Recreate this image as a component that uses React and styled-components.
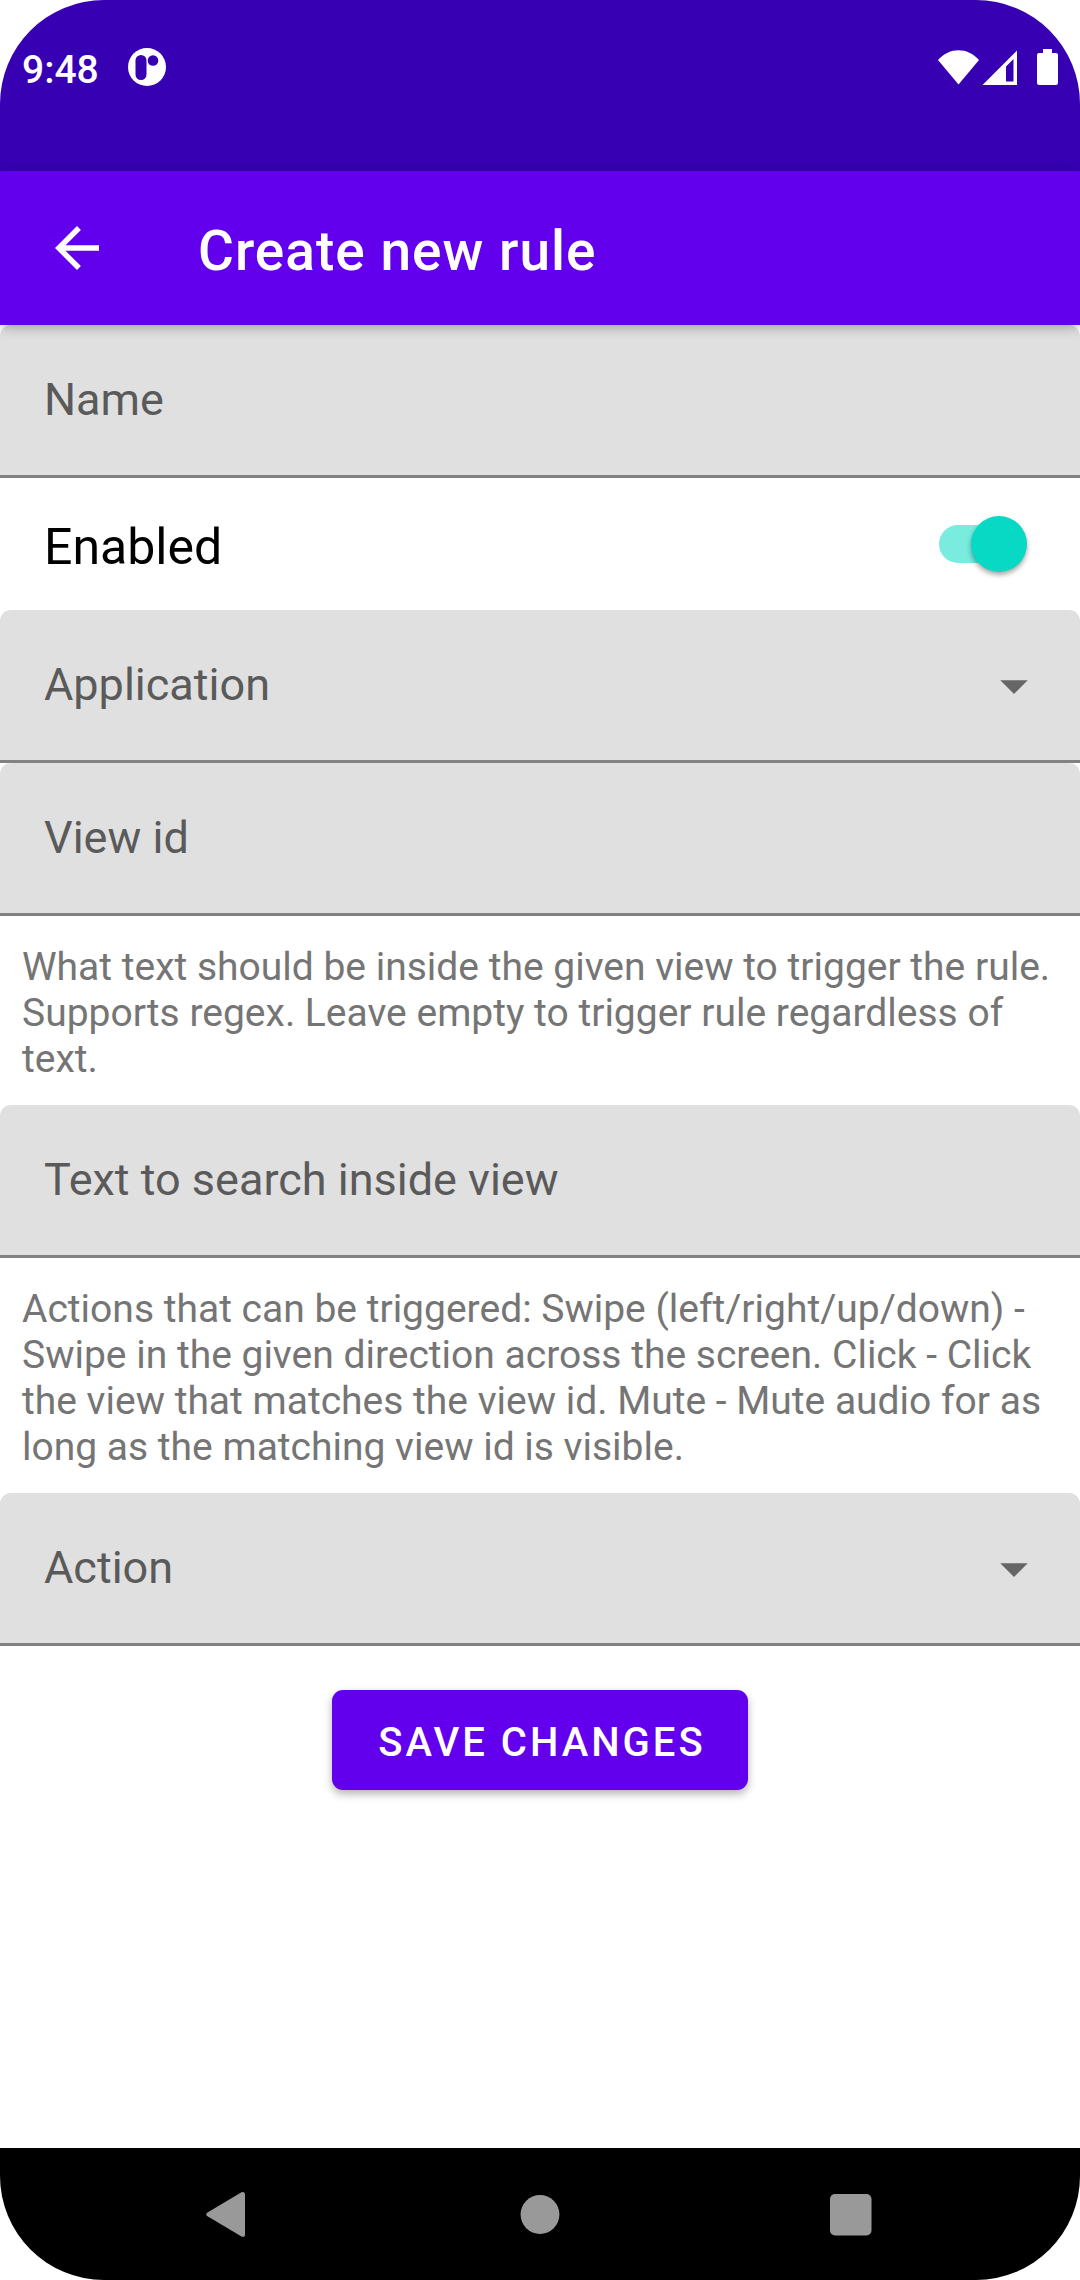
import React, { useState } from "react";
import styled, { createGlobalStyle, css } from "styled-components";

const color = {
  primary: "#6200ee",
  primaryDark: "#3700b3",
  secondary: "#07d9c4",
  track: "#79ebdf",
  field: "#e0e0e0",
  line: "#828282",
  label: "#5a5a5a",
  hint: "#757575",
  nav: "#999999",
};

const GlobalStyle = createGlobalStyle`
  * { box-sizing: border-box; }
  body { margin: 0; background: #fff; }
  button, input, select { font: inherit; }
`;

/* Single line text sits a little low in its line box. */
const fontPadding = css`
  padding-top: 5px;
`;

const Screen = styled.div`
  display: flex;
  flex-direction: column;
  min-height: 100vh;
  overflow: hidden;
  border-radius: 104px;
  background: #fff;
  font-family: Roboto, "Liberation Sans", sans-serif;
`;

const StatusBar = styled.div`
  display: flex;
  align-items: center;
  justify-content: space-between;
  height: 171px;
  padding: 0 22px 37px;
  background: ${color.primaryDark};
  color: #fff;
`;

const StatusGroup = styled.div`
  display: flex;
  align-items: center;
  gap: ${(p) => p.$gap}px;
`;

const Clock = styled.time`
  ${fontPadding}
  font-size: 39px;
  line-height: 52px;
  font-weight: 500;
`;

const AppBar = styled.header`
  position: relative;
  display: flex;
  align-items: center;
  gap: 88px;
  height: 154px;
  padding: 0 44px;
  background: ${color.primary};
  color: #fff;
  box-shadow: 0 2px 12px rgba(0, 0, 0, 0.3);
`;

const IconButton = styled.button`
  display: flex;
  padding: 0;
  border: 0;
  background: none;
  color: inherit;
`;

const Title = styled.h1`
  ${fontPadding}
  margin: 0;
  font-size: 55px;
  line-height: 64px;
  font-weight: 500;
  letter-spacing: 1px;
`;

const Form = styled.form`
  display: flex;
  flex-direction: column;
  flex: 1;
`;

const Field = styled.div`
  display: grid;
  grid-template: 150px / 1fr auto;
  align-items: center;
  padding-right: 33px;
  border-bottom: 3px solid ${color.line};
  background: linear-gradient(${color.field}, ${color.field}) padding-box;
  border-radius: 11px 11px 0 0;
  font-size: 45px;
  color: ${color.label};
`;

const control = css`
  grid-area: 1 / 1 / 2 / 3;
  width: 100%;
  height: 100%;
  padding: 0 44px;
  border: 0;
  outline: 0;
  background: none;
  color: #000;
`;

const TextInput = styled.input`
  ${control}
`;

const Select = styled.select`
  ${control}
  appearance: none;
`;

const FieldLabel = styled.label`
  grid-area: 1 / 1;
  padding-left: 44px;
  line-height: 52px;
  pointer-events: none;
  visibility: ${(p) => (p.$filled ? "hidden" : "visible")};
`;

const Caret = styled.svg`
  grid-area: 1 / 2;
  width: 66px;
  height: 66px;
  fill: #666;
  pointer-events: none;
`;

const SwitchRow = styled.div`
  display: flex;
  align-items: center;
  justify-content: space-between;
  height: 132px;
  padding: 0 53px 0 44px;
`;

const SwitchLabel = styled.label`
  ${fontPadding}
  font-size: 50px;
  line-height: 60px;
  color: #000;
`;

const Switch = styled.input`
  appearance: none;
  display: grid;
  grid-template-columns: 1fr;
  align-items: center;
  width: 88px;
  height: 56px;
  margin: 0;

  &::before {
    content: "";
    grid-area: 1 / 1;
    height: 38px;
    margin-right: 8px;
    border-radius: 19px;
    background: #b9b9b9;
  }

  &::after {
    content: "";
    grid-area: 1 / 1;
    width: 56px;
    height: 56px;
    border-radius: 50%;
    background: #ececec;
    box-shadow: 0 3px 5px rgba(0, 0, 0, 0.35);
  }

  &:checked::before {
    background: ${color.track};
  }

  &:checked::after {
    justify-self: end;
    background: ${color.secondary};
  }
`;

const Hint = styled.p`
  margin: 0;
  padding: 28px 22px 23px;
  font-size: 39px;
  line-height: 46px;
  color: ${color.hint};
`;

const SaveButton = styled.button`
  ${fontPadding}
  align-self: center;
  height: 100px;
  margin: 44px 0;
  padding-left: 46px;
  padding-right: 42px;
  border: 0;
  border-radius: 11px;
  background: ${color.primary};
  color: #fff;
  font-size: 40px;
  font-weight: 500;
  letter-spacing: 3px;
  text-transform: uppercase;
  box-shadow: 0 4px 8px rgba(0, 0, 0, 0.3);
`;

const NavBar = styled.nav`
  display: flex;
  height: 132px;
  padding: 0 72px;
  background: #000;
`;

const NavButton = styled.button`
  display: flex;
  flex: 1;
  align-items: center;
  justify-content: center;
  padding: 0;
  border: 0;
  background: none;
  color: ${color.nav};
`;

function TextField({ id, label }) {
  const [value, setValue] = useState("");
  return (
    <Field>
      <TextInput id={id} type="text" value={value} onChange={(e) => setValue(e.target.value)} />
      <FieldLabel htmlFor={id} $filled={value !== ""}>{label}</FieldLabel>
    </Field>
  );
}

function SelectField({ id, label, options }) {
  const [value, setValue] = useState("");
  return (
    <Field>
      <Select id={id} value={value} onChange={(e) => setValue(e.target.value)}>
        <option value="" />
        {options.map((o) => (
          <option key={o} value={o}>{o}</option>
        ))}
      </Select>
      <FieldLabel htmlFor={id} $filled={value !== ""}>{label}</FieldLabel>
      <Caret viewBox="0 0 24 24" aria-hidden="true">
        <path d="M7 10.300l5 5 5-5z" />
      </Caret>
    </Field>
  );
}

function NotificationIcon() {
  return (
    <svg width="38" height="38" viewBox="0 0 38 38" aria-hidden="true">
      <circle cx="19" cy="19" r="19" fill="#fff" />
      <rect x="7.5" y="7" width="11" height="25" rx="5.5" fill={color.primaryDark} />
      <circle cx="25" cy="12.5" r="5.3" fill={color.primaryDark} />
    </svg>
  );
}

function SystemIcons() {
  return (
    <svg width="120" height="38" viewBox="0 0 120 38" fill="#fff" aria-hidden="true">
      <path d="M0 12C11.500 -1 29.500 -1 41 12L20.500 36.500z" />
      <path fillRule="evenodd" d="M79 2.500V37H44.500zM75.500 11L68 18.500V33.500H75.500z" />
      <path d="M105 1h9v4h4a2 2 0 0 1 2 2v28a2 2 0 0 1-2 2h-17a2 2 0 0 1-2-2V7a2 2 0 0 1 2-2h4z" />
    </svg>
  );
}

export default function App() {
  const [enabled, setEnabled] = useState(true);
  return (
    <Screen>
      <GlobalStyle />
      <StatusBar>
        <StatusGroup $gap={29}>
          <Clock>9:48</Clock>
          <NotificationIcon />
        </StatusGroup>
        <SystemIcons />
      </StatusBar>
      <AppBar>
        <IconButton type="button" aria-label="Back">
          <svg width="66" height="66" viewBox="0 0 24 24" fill="currentColor" aria-hidden="true">
            <path d="M20 11H7.830l5.590-5.590L12 4l-8 8 8 8 1.410-1.410L7.830 13H20z" />
          </svg>
        </IconButton>
        <Title>Create new rule</Title>
      </AppBar>
      <Form onSubmit={(e) => e.preventDefault()}>
        <TextField id="name" label="Name" />
        <SwitchRow>
          <SwitchLabel htmlFor="enabled">Enabled</SwitchLabel>
          <Switch
            id="enabled"
            type="checkbox"
            role="switch"
            checked={enabled}
            onChange={(e) => setEnabled(e.target.checked)}
          />
        </SwitchRow>
        <SelectField id="application" label="Application" options={[]} />
        <TextField id="view-id" label="View id" />
        <Hint>
          What text should be inside the given view to trigger the rule. Supports regex. Leave
          empty to trigger rule regardless of text.
        </Hint>
        <TextField id="search-text" label="Text to search inside view" />
        <Hint>
          Actions that can be triggered: Swipe (left/right/up/down) - Swipe in the given direction
          across the screen. Click - Click the view that matches the view id. Mute - Mute audio for
          as long as the matching view id is visible.
        </Hint>
        <SelectField id="action" label="Action" options={[]} />
        <SaveButton type="submit">Save changes</SaveButton>
      </Form>
      <NavBar>
        <NavButton type="button" aria-label="Back">
          <svg width="44" height="46" viewBox="0 0 44 46" fill="currentColor" aria-hidden="true">
            <path d="M1.500 21.500L35.500 1.200Q39 0 39 3.500V43.500Q39 47 35.500 45.500L1.500 25.200Q-1 23.500 1.500 21.500z" />
          </svg>
        </NavButton>
        <NavButton type="button" aria-label="Home">
          <svg width="40" height="40" viewBox="0 0 40 40" fill="currentColor" aria-hidden="true">
            <circle cx="20" cy="20.500" r="19.400" />
          </svg>
        </NavButton>
        <NavButton type="button" aria-label="Recent apps">
          <svg width="44" height="44" viewBox="0 0 44 44" fill="currentColor" aria-hidden="true">
            <rect x="0" y="2" width="41.500" height="41.500" rx="5" />
          </svg>
        </NavButton>
      </NavBar>
    </Screen>
  );
}
